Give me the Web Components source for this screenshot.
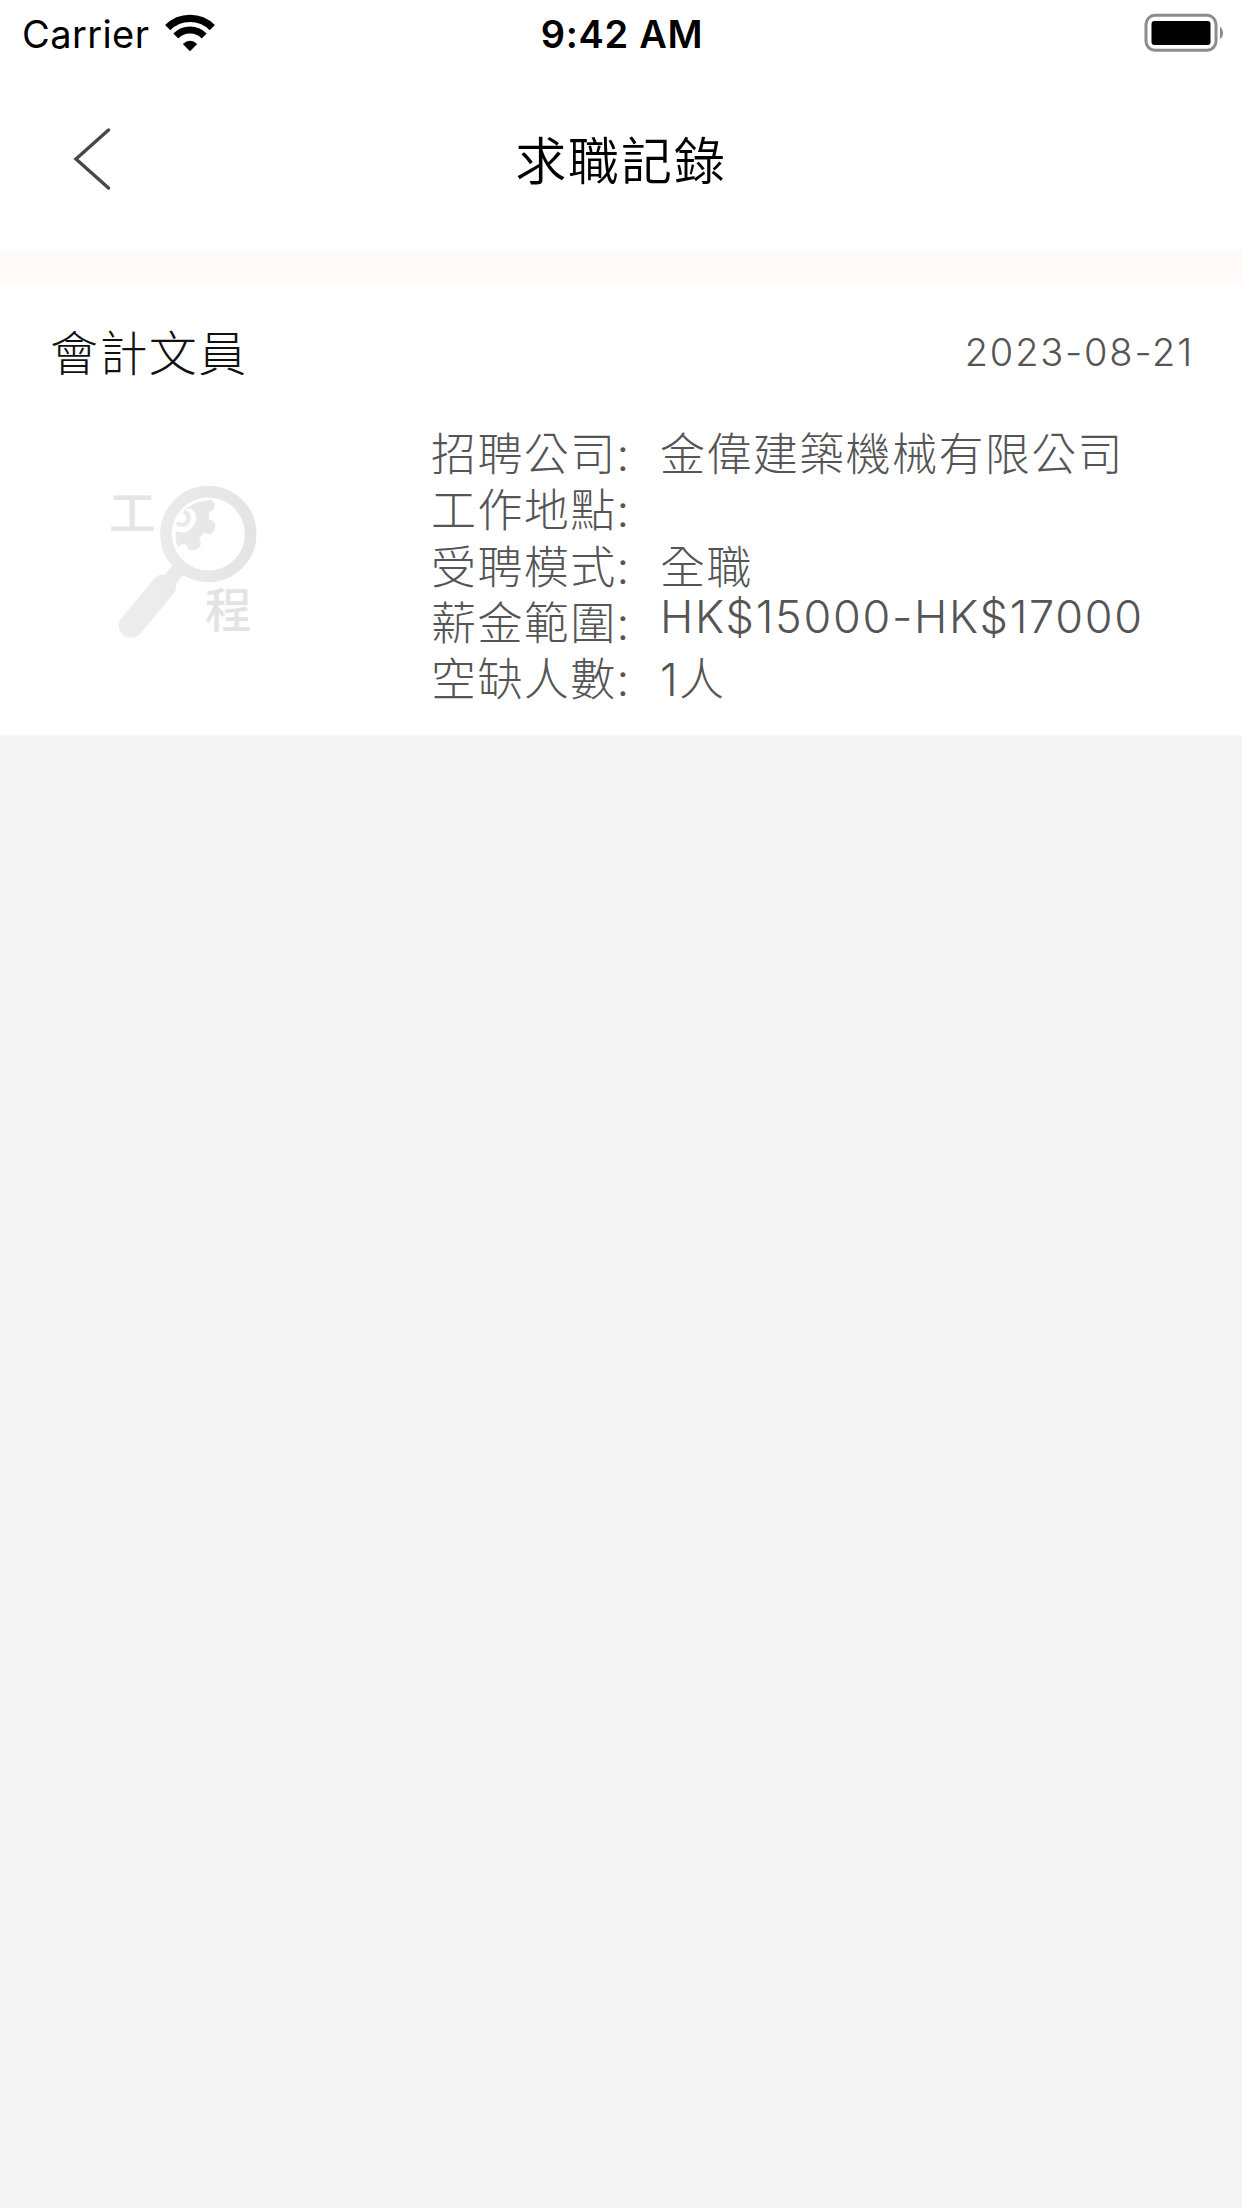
<!DOCTYPE html>
<html lang="zh-Hant">
<head>
<meta charset="utf-8">
<title>求職記錄</title>
<style>
  html, body {
    margin: 0;
    padding: 0;
  }
  body {
    width: 1242px;
    min-height: 2208px;
    background: #f5f5f5;
    font-family: Inter, "Noto Sans CJK TC", sans-serif;
    overflow: hidden;
  }
</style>
</head>
<body>
<phone-status carrier="Carrier" time="9:42 AM"></phone-status>
<nav-header>求職記錄</nav-header>
<job-card header="會計文員" date="2023-08-21">
  <job-icon slot="icon"></job-icon>
  <job-row label="招聘公司:">金偉建築機械有限公司</job-row>
  <job-row label="工作地點:"></job-row>
  <job-row label="受聘模式:">全職</job-row>
  <job-row label="薪金範圍:" latin>HK$15000-HK$17000</job-row>
  <job-row label="空缺人數:">1人</job-row>
</job-card>

<script>
const template = document.createElement('template');

// STATUS BAR
template.innerHTML = `
  <style>
    :host {
      display: grid;
      grid-template-columns: 1fr auto 1fr;
      align-items: center;
      height: 68px;
      padding: 0 20px 0 22px;
      box-sizing: border-box;
      background: #fff;
      color: #000;
      font-size: 38px;
      line-height: 68px;
    }
    .left {
      display: flex;
      align-items: center;
      gap: 16px;
    }
    .left svg {
      margin-bottom: 2px;
    }
    .carrier {
      letter-spacing: 0.4px;
    }
    .time {
      font-weight: 600;
      letter-spacing: 0.7px;
    }
    .battery {
      justify-self: end;
      margin: 0 -1px 3px 0;
    }
    svg {
      display: block;
    }
  </style>
  <div class="left">
    <span class="carrier"></span>
    <svg width="50" height="38" viewBox="0 0 50 38">
      <g fill="none" stroke="#000">
        <path d="M2.7 13.6A31.5 31.5 0 0 1 47.3 13.6" stroke-width="7.4"/>
        <path d="M10.8 22A20 20 0 0 1 39.2 22" stroke-width="7"/>
      </g>
      <path d="M25 37.2L17.8 30Q25 23.6 32.2 30Z"/>
    </svg>
  </div>
  <span class="time"></span>
  <svg class="battery" width="80" height="40" viewBox="0 0 80 40">
    <rect x="3" y="2.3" width="70" height="35" rx="9" fill="none" stroke="#8c8c8c" stroke-width="3"/>
    <rect x="8.5" y="8" width="59" height="24" rx="3"/>
    <path d="M77 13.5Q80 16 80 20T77 26Z" fill="#8c8c8c"/>
  </svg>
`;
class phoneStatus extends HTMLElement {
  constructor() {
    super();
    this.attachShadow({ mode: 'open' });
    this.shadowRoot.appendChild(phoneStatus.template.content.cloneNode(true));
    this.shadowRoot.querySelector('.carrier').textContent = this.getAttribute('carrier');
    this.shadowRoot.querySelector('.time').textContent = this.getAttribute('time');
  }
}
phoneStatus.template = template.cloneNode(true);
window.customElements.define('phone-status', phoneStatus);

// NAV HEADER
template.innerHTML = `
  <style>
    :host {
      display: grid;
      grid-template-columns: 200px 1fr 200px;
      align-items: center;
      height: 216px;
      padding-bottom: 34px;
      box-sizing: border-box;
      background: #fff;
      border-bottom: 33px solid #fff9f8;
    }
    svg {
      display: block;
      margin: 33px 0 0 70px;
    }
    h1 {
      margin: 38px 0 0;
      text-align: center;
      color: #000;
      font-size: 51px;
      font-weight: 350;
      line-height: 70px;
      letter-spacing: 1.9px;
    }
  </style>
  <svg width="44" height="66" viewBox="0 0 44 66">
    <path d="M38.5 4L6 33L38.5 62" fill="none" stroke="#484848" stroke-width="3.4" stroke-linecap="round"/>
  </svg>
  <h1><slot></slot></h1>
`;
class navHeader extends HTMLElement {
  constructor() {
    super();
    this.attachShadow({ mode: 'open' });
    this.shadowRoot.appendChild(navHeader.template.content.cloneNode(true));
  }
}
navHeader.template = template.cloneNode(true);
window.customElements.define('nav-header', navHeader);

// JOB CARD
template.innerHTML = `
  <style>
    :host {
      display: block;
      height: 451px;
      padding: 36px 48px 0 50px;
      box-sizing: border-box;
      background: #fff;
    }
    header {
      display: flex;
      justify-content: space-between;
      align-items: center;
      height: 66px;
    }
    h2 {
      margin: 2px 0 0;
      color: #111;
      font-size: 48px;
      font-weight: 300;
      line-height: 66px;
      letter-spacing: 1.4px;
    }
    .date {
      color: #555;
      font-size: 38px;
      font-weight: 300;
      line-height: 58px;
      margin-bottom: 2px;
      letter-spacing: 1.8px;
    }
    .body {
      display: grid;
      grid-template-columns: 381px 1fr;
      margin-top: 39px;
    }
    .icon {
      padding: 45px 0 0 40px;
    }
    .rows {
      padding-top: 2px;
    }
  </style>
  <header>
    <h2></h2>
    <span class="date"></span>
  </header>
  <div class="body">
    <div class="icon"><slot name="icon"></slot></div>
    <div class="rows"><slot></slot></div>
  </div>
`;
class jobCard extends HTMLElement {
  constructor() {
    super();
    this.attachShadow({ mode: 'open' });
    this.shadowRoot.appendChild(jobCard.template.content.cloneNode(true));
    this.shadowRoot.querySelector('h2').textContent = this.getAttribute('header');
    this.shadowRoot.querySelector('.date').textContent = this.getAttribute('date');
  }
}
jobCard.template = template.cloneNode(true);
window.customElements.define('job-card', jobCard);

// JOB ROW
template.innerHTML = `
  <style>
    :host {
      display: grid;
      grid-template-columns: 229px 1fr;
      align-items: start;
      height: 56.3px;
      color: #555;
      font-size: 45px;
      font-weight: 300;
      line-height: 56px;
      letter-spacing: 1.4px;
      white-space: nowrap;
    }
    :host([latin]) .value {
      line-height: 41px;
      letter-spacing: 1.7px;
    }
  </style>
  <span class="label"></span>
  <span class="value"><slot></slot></span>
`;
class jobRow extends HTMLElement {
  constructor() {
    super();
    this.attachShadow({ mode: 'open' });
    this.shadowRoot.appendChild(jobRow.template.content.cloneNode(true));
    this.shadowRoot.querySelector('.label').textContent = this.getAttribute('label');
  }
}
jobRow.template = template.cloneNode(true);
window.customElements.define('job-row', jobRow);

// JOB ICON
template.innerHTML = `
  <style>
    :host {
      display: block;
      width: 190px;
      height: 190px;
    }
    svg {
      display: block;
    }
    text {
      font-family: "Noto Sans CJK TC", sans-serif;
      font-size: 140px;
      font-weight: 500;
    }
  </style>
  <svg width="190" height="190" viewBox="0 0 570 570">
    <defs>
      <linearGradient id="shade" gradientUnits="userSpaceOnUse" x1="86" y1="0" x2="500" y2="0">
        <stop offset="0" stop-color="#eeeeee"/>
        <stop offset="1" stop-color="#e4e4e4"/>
      </linearGradient>
    </defs>
    <circle cx="355" cy="192" r="127" fill="none" stroke="url(#shade)" stroke-width="35"/>
    <path d="M248 284L280 314L258 341Q262 355 252 369L155 487C139 507 113 509 97 493C83 479 83 459 95 443L192 327Q205 312 225 314Z" fill="url(#shade)"/>
    <path d="M284 119Q318 92 364 89Q373 95 374 109Q371 124 357 125L356 149Q370 149 376 164Q376 185 362 193Q352 194 344 187L327 205Q335 215 331 228Q321 242 304 242L292 233Q292 224 283 222Q270 223 264 234Q255 214 257 183Q286 194 306 173Q326 151 314 127Q303 110 284 119Z" fill="url(#shade)"/>
    <path d="M281 124C298 130 300 151 289 160C281 167 268 166 262 158" fill="none" stroke="url(#shade)" stroke-width="13"/>
    <text x="57" y="181" fill="#e5e5e5">工</text>
    <text x="345" y="470" fill="#e3e3e3">程</text>
  </svg>
`;
class jobIcon extends HTMLElement {
  constructor() {
    super();
    this.attachShadow({ mode: 'open' });
    this.shadowRoot.appendChild(jobIcon.template.content.cloneNode(true));
  }
}
jobIcon.template = template.cloneNode(true);
window.customElements.define('job-icon', jobIcon);
</script>
</body>
</html>
